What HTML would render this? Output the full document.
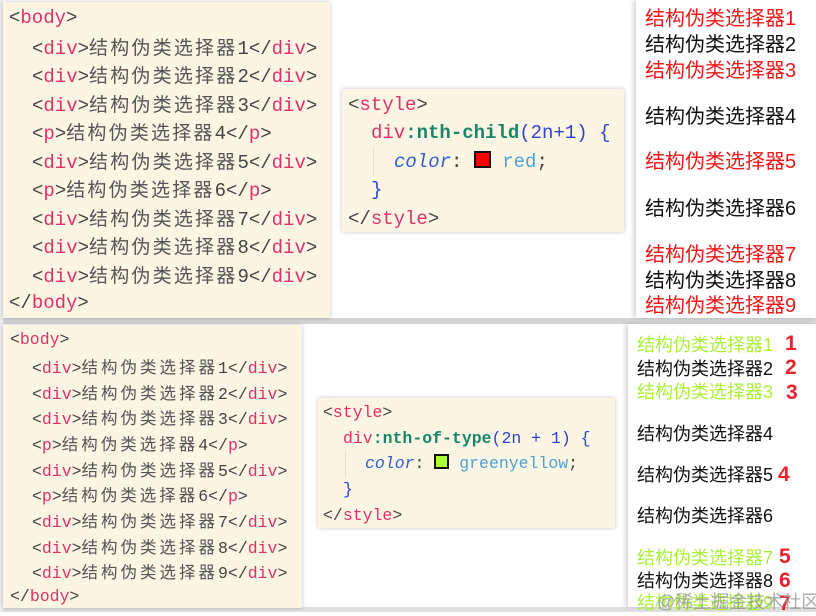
<!DOCTYPE html>
<html><head><meta charset="utf-8"><style>
*{margin:0;padding:0;box-sizing:border-box}
body{width:816px;height:612px;background:#fff;position:relative;overflow:hidden;font-family:"Liberation Mono","DejaVu Sans Mono","Noto Sans CJK SC",monospace}
.box{position:absolute;background:#fcf5e3;box-shadow:0 0 4px rgba(0,0,0,.25)}
.l{position:absolute;white-space:pre;color:#444}
.t{color:#e0306a}
.c{color:#555;font-family:"Noto Sans CJK SC","WenQuanYi Zen Hei",sans-serif}
.sel{color:#17876a;font-weight:bold}
.b{color:#2a45d0}
.k{color:#2c5fd0;font-style:italic}
.v{color:#4aa3d8}
.sw{display:inline-block;border:2px solid #111;vertical-align:middle}
.r{position:absolute;white-space:nowrap;font-family:"Liberation Sans","Noto Sans CJK SC",sans-serif}
.n{position:absolute;color:#e8222e;font-weight:bold;font-family:"Liberation Sans",sans-serif}
.top .l{font-size:19px;line-height:24px}
.top .c{letter-spacing:2.2px;font-size:19px}
.bot .l{font-size:16.5px;line-height:22px}
.bot .c{letter-spacing:3px;font-size:16.5px}
</style></head><body>
<div style="position:absolute;left:0;top:318px;width:816px;height:6px;background:#d4d4d4"></div>
<div style="position:absolute;left:0;top:607px;width:816px;height:5px;background:#e0e0e0"></div>
<div style="position:absolute;left:0;top:0;width:3px;height:612px;background:#eee"></div>

<div class="top">
<div class="box" style="left:3px;top:2px;width:327px;height:316px"></div>
<div class="l" style="left:9px;top:6px">&lt;<span class="t">body</span>&gt;</div>
<div class="l" style="left:32px;top:35px">&lt;<span class="t">div</span>&gt;<span class="c">结构伪类选择器</span>1&lt;/<span class="t">div</span>&gt;</div>
<div class="l" style="left:32px;top:63px">&lt;<span class="t">div</span>&gt;<span class="c">结构伪类选择器</span>2&lt;/<span class="t">div</span>&gt;</div>
<div class="l" style="left:32px;top:92px">&lt;<span class="t">div</span>&gt;<span class="c">结构伪类选择器</span>3&lt;/<span class="t">div</span>&gt;</div>
<div class="l" style="left:32px;top:120px">&lt;<span class="t">p</span>&gt;<span class="c">结构伪类选择器</span>4&lt;/<span class="t">p</span>&gt;</div>
<div class="l" style="left:32px;top:149px">&lt;<span class="t">div</span>&gt;<span class="c">结构伪类选择器</span>5&lt;/<span class="t">div</span>&gt;</div>
<div class="l" style="left:32px;top:177px">&lt;<span class="t">p</span>&gt;<span class="c">结构伪类选择器</span>6&lt;/<span class="t">p</span>&gt;</div>
<div class="l" style="left:32px;top:206px">&lt;<span class="t">div</span>&gt;<span class="c">结构伪类选择器</span>7&lt;/<span class="t">div</span>&gt;</div>
<div class="l" style="left:32px;top:234px">&lt;<span class="t">div</span>&gt;<span class="c">结构伪类选择器</span>8&lt;/<span class="t">div</span>&gt;</div>
<div class="l" style="left:32px;top:263px">&lt;<span class="t">div</span>&gt;<span class="c">结构伪类选择器</span>9&lt;/<span class="t">div</span>&gt;</div>
<div class="l" style="left:9px;top:291px">&lt;/<span class="t">body</span>&gt;</div>

<div class="box" style="left:342px;top:89px;width:282px;height:143px"></div>
<div class="l" style="left:348px;top:93px">&lt;<span class="t">style</span>&gt;</div>
<div class="l" style="left:371px;top:121px"><span class="t">div</span><span class="sel">:nth-child</span><span class="b">(2n+1) {</span></div>
<div style="position:absolute;left:373px;top:146px;width:1px;height:30px;background:#e8e0cc"></div>
<div class="l" style="left:394px;top:150px"><span class="k">color</span>: <span class="sw" style="width:17px;height:17px;background:#f00;margin-top:-4px"></span> <span class="v">red</span>;</div>
<div class="l" style="left:371px;top:178px"><span class="b">}</span></div>
<div class="l" style="left:348px;top:207px">&lt;/<span class="t">style</span>&gt;</div>
</div>

<div style="position:absolute;left:636px;top:0;width:180px;height:318px;background:#fff;box-shadow:-3px 0 4px rgba(0,0,0,.15)"></div>
<div style="font-size:20px">
<div class="r" style="left:645px;top:2px;color:#f01818">结构伪类选择器1</div>
<div class="r" style="left:645px;top:28px;color:#111">结构伪类选择器2</div>
<div class="r" style="left:645px;top:54px;color:#f01818">结构伪类选择器3</div>
<div class="r" style="left:645px;top:100px;color:#111">结构伪类选择器4</div>
<div class="r" style="left:645px;top:145px;color:#f01818">结构伪类选择器5</div>
<div class="r" style="left:645px;top:192px;color:#111">结构伪类选择器6</div>
<div class="r" style="left:645px;top:238px;color:#f01818">结构伪类选择器7</div>
<div class="r" style="left:645px;top:264px;color:#111">结构伪类选择器8</div>
<div class="r" style="left:645px;top:289px;color:#f01818">结构伪类选择器9</div>
</div>

<div class="bot">
<div class="box" style="left:3px;top:325px;width:299px;height:283px"></div>
<div class="l" style="left:10px;top:329px">&lt;<span class="t">body</span>&gt;</div>
<div class="l" style="left:32px;top:355px">&lt;<span class="t">div</span>&gt;<span class="c">结构伪类选择器</span>1&lt;/<span class="t">div</span>&gt;</div>
<div class="l" style="left:32px;top:381px">&lt;<span class="t">div</span>&gt;<span class="c">结构伪类选择器</span>2&lt;/<span class="t">div</span>&gt;</div>
<div class="l" style="left:32px;top:406px">&lt;<span class="t">div</span>&gt;<span class="c">结构伪类选择器</span>3&lt;/<span class="t">div</span>&gt;</div>
<div class="l" style="left:32px;top:432px">&lt;<span class="t">p</span>&gt;<span class="c">结构伪类选择器</span>4&lt;/<span class="t">p</span>&gt;</div>
<div class="l" style="left:32px;top:458px">&lt;<span class="t">div</span>&gt;<span class="c">结构伪类选择器</span>5&lt;/<span class="t">div</span>&gt;</div>
<div class="l" style="left:32px;top:483px">&lt;<span class="t">p</span>&gt;<span class="c">结构伪类选择器</span>6&lt;/<span class="t">p</span>&gt;</div>
<div class="l" style="left:32px;top:509px">&lt;<span class="t">div</span>&gt;<span class="c">结构伪类选择器</span>7&lt;/<span class="t">div</span>&gt;</div>
<div class="l" style="left:32px;top:535px">&lt;<span class="t">div</span>&gt;<span class="c">结构伪类选择器</span>8&lt;/<span class="t">div</span>&gt;</div>
<div class="l" style="left:32px;top:560px">&lt;<span class="t">div</span>&gt;<span class="c">结构伪类选择器</span>9&lt;/<span class="t">div</span>&gt;</div>
<div class="l" style="left:10px;top:586px">&lt;/<span class="t">body</span>&gt;</div>

<div class="box" style="left:318px;top:398px;width:297px;height:130px"></div>
<div class="l" style="left:323px;top:402px">&lt;<span class="t">style</span>&gt;</div>
<div class="l" style="left:343px;top:428px"><span class="t">div</span><span class="sel">:nth-of-type</span><span class="b">(2n + 1) {</span></div>
<div style="position:absolute;left:345px;top:450px;width:1px;height:28px;background:#e8e0cc"></div>
<div class="l" style="left:365px;top:453px"><span class="k">color</span>: <span class="sw" style="width:15px;height:15px;background:#adff2f;margin-top:-4px"></span> <span class="v">greenyellow</span>;</div>
<div class="l" style="left:343px;top:479px"><span class="b">}</span></div>
<div class="l" style="left:323px;top:505px">&lt;/<span class="t">style</span>&gt;</div>
</div>

<div style="position:absolute;left:628px;top:324px;width:185px;height:283px;background:#fff;box-shadow:-3px 0 4px rgba(0,0,0,.15)"></div>
<div style="font-size:18px">
<div class="r" style="left:637px;top:331px;color:#a8f03a">结构伪类选择器1</div>
<div class="r" style="left:637px;top:355px;color:#111">结构伪类选择器2</div>
<div class="r" style="left:637px;top:378px;color:#a8f03a">结构伪类选择器3</div>
<div class="r" style="left:637px;top:420px;color:#111">结构伪类选择器4</div>
<div class="r" style="left:637px;top:461px;color:#111">结构伪类选择器5</div>
<div class="r" style="left:637px;top:502px;color:#111">结构伪类选择器6</div>
<div class="r" style="left:637px;top:544px;color:#a8f03a">结构伪类选择器7</div>
<div class="r" style="left:637px;top:567px;color:#111">结构伪类选择器8</div>
<div class="r" style="left:637px;top:589px;color:#a8f03a">结构伪类选择器9</div>
</div>
<div style="font-size:21px">
<div class="n" style="left:785px;top:332px">1</div>
<div class="n" style="left:785px;top:356px">2</div>
<div class="n" style="left:786px;top:381px">3</div>
<div class="n" style="left:778px;top:463px">4</div>
<div class="n" style="left:779px;top:545px">5</div>
<div class="n" style="left:779px;top:569px">6</div>
<div class="n" style="left:779px;top:592px">7</div>
</div>
<div class="r" style="left:657px;top:588px;font-size:18px;color:rgba(150,150,150,.8)">@稀土掘金技术社区</div>
</body></html>
